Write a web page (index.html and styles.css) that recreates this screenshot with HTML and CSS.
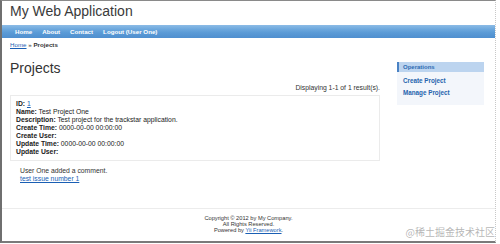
FILE: index.html
```html
<!DOCTYPE html>
<html>
<head>
<meta charset="utf-8">
<link rel="stylesheet" href="styles.css">
</head>
<body>
<div class="frame">
  <div class="header">My Web Application</div>
  <div class="mainmenu">
    <a href="#">Home</a>
    <a href="#">About</a>
    <a href="#">Contact</a>
    <a href="#">Logout (User One)</a>
  </div>
  <div class="breadcrumbs"><a href="#">Home</a> &raquo; <span>Projects</span></div>
  <div class="main">
    <div class="content">
      <h1 class="title">Projects</h1>
      <div class="summary">Displaying 1-1 of 1 result(s).</div>
      <div class="view">
        <div><b>ID:</b> <a href="#">1</a></div>
        <div><b>Name:</b> Test Project One</div>
        <div><b>Description:</b> Test project for the trackstar application.</div>
        <div><b>Create Time:</b> 0000-00-00 00:00:00</div>
        <div><b>Create User:</b></div>
        <div><b>Update Time:</b> 0000-00-00 00:00:00</div>
        <div><b>Update User:</b></div>
      </div>
      <div class="comment">
        <div>User One added a comment.</div>
        <div><a href="#">test issue number 1</a></div>
      </div>
    </div>
    <div class="sidebar">
      <div class="portlet-title">Operations</div>
      <div class="portlet-body">
        <a href="#">Create Project</a>
        <a href="#">Manage Project</a>
      </div>
    </div>
  </div>
  <div class="footer">
    <div>Copyright &copy; 2012 by My Company.</div>
    <div>All Rights Reserved.</div>
    <div>Powered by <a href="#">Yii Framework</a>.</div>
  </div>
  <div class="watermark">@稀土掘金技术社区</div>
</div>
</body>
</html>
```
FILE: styles.css
```css
html, body {
  margin: 0;
  padding: 0;
  background: #fff;
}
body {
  font-family: "Liberation Sans", Arial, sans-serif;
  color: #2a2a2a;
}
a { color: #1a5fb4; }
.frame {
  position: relative;
  box-sizing: border-box;
  width: 496px;
  height: 243px;
  border-top: 1px solid #8a8a8a;
  border-left: 2px solid #6f6f6f;
  border-bottom: 2px solid #7a7a7a;
  border-right: 1px dotted #c8c8c8;
  overflow: hidden;
}
.header {
  height: 24px;
  box-sizing: border-box;
  padding: 2px 0 0 8px;
  font-size: 14px;
  line-height: 16px;
  color: #3a3a3a;
}
.mainmenu {
  height: 13px;
  display: flex;
  align-items: center;
  padding-left: 8px;
  background: linear-gradient(#8cbbe6 0%, #6aa6dc 35%, #5a9ad6 60%, #4f8fcf 100%);
}
.mainmenu a {
  color: #fff;
  text-decoration: none;
  font-weight: bold;
  font-size: 6.2px;
  line-height: 8px;
  padding: 0 5px;
}
.breadcrumbs {
  margin-top: 3px;
  padding-left: 8px;
  font-size: 6.2px;
  line-height: 8px;
  height: 8px;
  color: #333;
}
.breadcrumbs a { color: #1a5fb4; }
.breadcrumbs span { font-weight: bold; }
.main {
  display: flex;
  padding-left: 8px;
  gap: 18px;
}
.content {
  width: 370px;
}
.title {
  margin: 11px 0 0 0;
  font-size: 14px;
  line-height: 16px;
  font-weight: normal;
  color: #333;
}
.summary {
  margin-top: 8px;
  text-align: right;
  font-size: 6.8px;
  line-height: 8px;
  color: #333;
}
.view {
  margin-top: 3px;
  border: 1px solid #ebebeb;
  padding: 4px 5px 4px 5px;
  font-size: 6.8px;
  line-height: 8px;
  color: #222;
}
.comment {
  margin-top: 6px;
  padding-left: 10px;
  font-size: 6.8px;
  line-height: 8px;
  color: #333;
}
.sidebar {
  width: 87px;
  margin-top: 13px;
  margin-left: -1px;
  align-self: flex-start;
}
.portlet-title {
  height: 10px;
  box-sizing: border-box;
  border-left: 2px solid #4a82c4;
  background: #bcd4ef;
  padding-left: 4px;
  font-size: 6px;
  line-height: 10px;
  font-weight: bold;
  color: #2d6bb3;
}
.portlet-body {
  background: #f3f6fb;
  padding: 3px 0 6px 6px;
  display: flex;
  flex-direction: column;
}
.portlet-body a {
  font-size: 6.3px;
  line-height: 12px;
  font-weight: bold;
  color: #2563ad;
  text-decoration: none;
}
.footer {
  margin-top: 25px;
  border-top: 1px solid #ececec;
  padding-top: 6px;
  text-align: center;
  font-size: 5.7px;
  line-height: 6px;
  color: #333;
}
.watermark {
  position: absolute;
  right: 0;
  bottom: 3px;
  font-family: "Noto Sans CJK SC", sans-serif;
  font-size: 10px;
  line-height: 12px;
  color: rgba(150, 150, 150, 0.7);
}
```
